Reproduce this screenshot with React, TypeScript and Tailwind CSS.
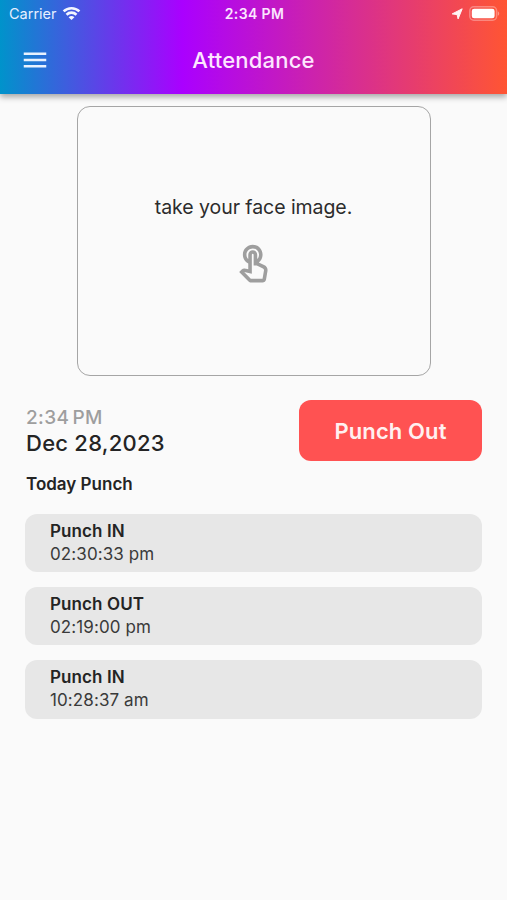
import { MdMenu, MdOutlineTouchApp } from "react-icons/md";

const punches = [
  { label: "Punch IN", time: "02:30:33 pm" },
  { label: "Punch OUT", time: "02:19:00 pm" },
  { label: "Punch IN", time: "10:28:37 am" },
];

function WifiIcon() {
  return (
    <svg width="19" height="15" viewBox="0 0 20 16" fill="none" stroke="#f4f6ff" strokeWidth="2.8">
      <path d="M1.6 5.8C6.2 1.2 13.8 1.2 18.4 5.8" />
      <path d="M4.7 9.3C7.7 6.4 12.3 6.4 15.3 9.3" />
      <path d="M10 15L6.9 12C8.7 10.2 11.3 10.2 13.1 12Z" fill="#f4f6ff" stroke="none" />
    </svg>
  );
}

function StatusBar() {
  return (
    <div className="flex h-[27px] items-center justify-between pr-[7px] pl-[9px] text-white">
      <div className="flex w-[120px] items-center gap-[5px]">
        <span className="w-[48px] text-[14.5px] leading-5 text-[#e6efff]">Carrier</span>
        <WifiIcon />
      </div>
      <span className="text-[14px] leading-5 font-semibold tracking-[0.4px] text-[#fbe6ff]">2:34 PM</span>
      <div className="flex w-[120px] items-center justify-end gap-[6px]">
        <svg width="12" height="12" viewBox="0 0 12 12" fill="#fff4f4" stroke="#fff4f4" strokeWidth="1" strokeLinejoin="round">
          <path d="M11.2 0.8L7.1 10.9L6.1 6.6L1.2 5.9Z" />
        </svg>
        <svg width="31" height="15" viewBox="0 0 31 15">
          <rect x="0.8" y="0.8" width="26.8" height="13.4" rx="4" fill="none" stroke="white" strokeOpacity="0.32" strokeWidth="1.5" />
          <rect x="2.8" y="2.7" width="22.8" height="9.6" rx="2.4" fill="white" />
          <path d="M28.8 5.2C30.7 6 30.7 9 28.8 9.8Z" fill="white" fillOpacity="0.4" />
        </svg>
      </div>
    </div>
  );
}

export default function App() {
  return (
    <div className="h-[900px] w-[507px] overflow-hidden bg-[#fafafa] font-['Inter',sans-serif] whitespace-nowrap text-[#242424]">
      <header className="h-[94px] bg-linear-to-r/srgb from-[#0093cb] via-[#aa00ff] via-36% to-[#ff5533] shadow-[0_3px_6px_rgba(0,0,0,0.34)]">
        <StatusBar />
        <div className="grid h-[65px] grid-cols-[70px_1fr_70px] items-center">
          <button className="pl-[20px]" aria-label="Menu">
            <MdMenu className="size-[30px] text-[#e8f2ff]" />
          </button>
          <h1 className="text-center text-[22px] leading-7 font-medium tracking-[0.2px] text-[#fde6ff]">Attendance</h1>
        </div>
      </header>

      <main>
        <div className="mx-auto mt-[12px] flex h-[270px] w-[354px] flex-col items-center rounded-[13px] border-[1.5px] border-[#a5a5a5] pt-[86px]">
          <p className="text-[19.5px] leading-7 tracking-[-0.06px] text-[#2c2c2c]">take your face image.</p>
          <MdOutlineTouchApp className="mt-[22px] size-[43px] text-[#9e9e9e]" />
        </div>

        <section className="mt-[24px] flex justify-between pr-[25px] pl-[26px]">
          <div className="pt-[4px]">
            <p className="text-[19px] leading-[27px] font-medium tracking-[0.4px] text-[#9e9e9e] [word-spacing:-2.5px]">2:34 PM</p>
            <p className="text-[22px] leading-[25px] font-medium tracking-[0.25px]">Dec 28,2023</p>
          </div>
          <button className="h-[61px] w-[183px] rounded-[12px] bg-[#ff5252] pt-px text-[22px] font-semibold tracking-[0.1px] text-[#fff0f0]">
            Punch Out
          </button>
        </section>

        <h2 className="mt-[11px] pl-[26px] text-[17px] leading-6 font-semibold">Today Punch</h2>

        <ul className="mt-[18px] flex flex-col gap-[15px] px-[25px]">
          {punches.map((p, i) => (
            <li key={i} className="h-[58.2px] rounded-[12px] bg-[#e7e7e7] pt-[6px] pl-[25px]">
              <p className="text-[17px] leading-[23px] font-semibold tracking-[0.1px]">{p.label}</p>
              <p className="text-[17px] leading-[23px] tracking-[0.1px] text-[#3a3a3a]">{p.time}</p>
            </li>
          ))}
        </ul>
      </main>
    </div>
  );
}
